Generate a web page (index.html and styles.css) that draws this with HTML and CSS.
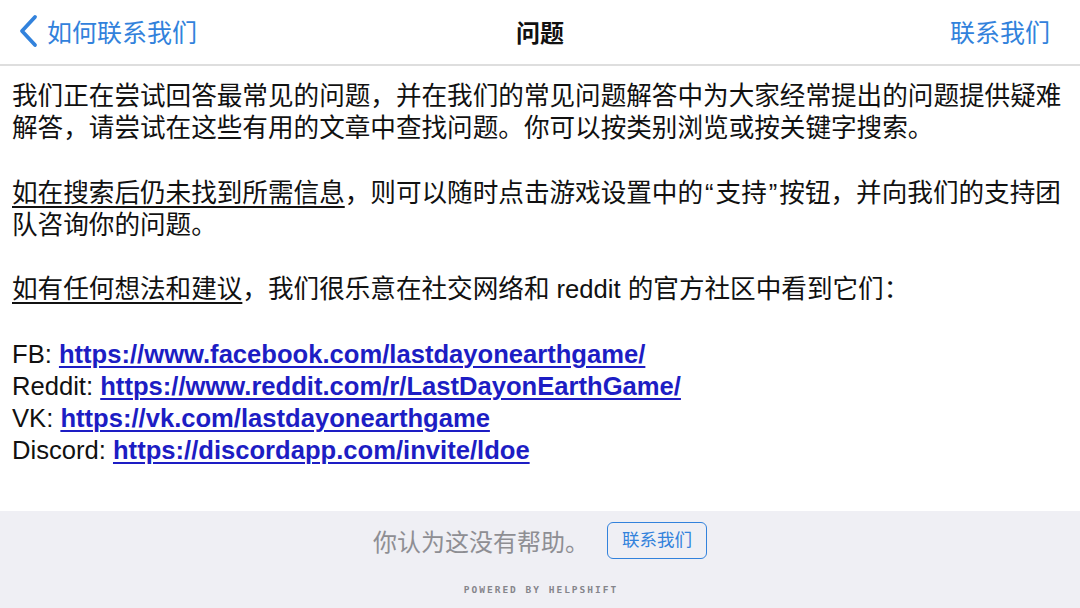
FILE: index.html
```html
<!DOCTYPE html>
<html lang="zh-CN">
<head>
    <meta charset="utf-8">
    <title>问题</title>
    <link rel="stylesheet" href="styles.css">
</head>
<body>
    <div class="nav-bar">
        <div class="nav-back">
            <svg class="back-icon" width="22" height="34" viewBox="0 0 22 34">
                <path d="M18 3 L5 17 L18 31" fill="none" stroke="#3282dc" stroke-width="3.8" stroke-linecap="round" stroke-linejoin="round"/>
            </svg>
            <span>如何联系我们</span>
        </div>
        <div class="nav-title">问题</div>
        <div class="nav-action">联系我们</div>
    </div>

    <div class="faq-content">
        <p>我们正在尝试回答最常见的问题，并在我们的常见问题解答中为大家经常提出的问题提供疑难解答，请尝试在这些有用的文章中查找问题。你可以按类别浏览或按关键字搜索。</p>
        <p><span class="under">如在搜索后仍未找到所需信息</span>，则可以随时点击游戏设置中的<span class="quote">“</span>支持<span class="quote">”</span>按钮，并向我们的支持团队咨询你的问题。</p>
        <p><span class="under">如有任何想法和建议</span>，我们很乐意在社交网络和 reddit 的官方社区中看到它们：</p>
        <p>
            FB: <a href="#">https://www.facebook.com/lastdayonearthgame/</a><br>
            Reddit: <a href="#">https://www.reddit.com/r/LastDayonEarthGame/</a><br>
            VK: <a href="#">https://vk.com/lastdayonearthgame</a><br>
            Discord: <a href="#">https://discordapp.com/invite/ldoe</a>
        </p>
    </div>

    <div class="footer">
        <div class="footer-row">
            <span class="footer-text">你认为这没有帮助。</span>
            <span class="contact-button">联系我们</span>
        </div>
        <div class="powered">POWERED BY HELPSHIFT</div>
    </div>
</body>
</html>
```

FILE: styles.css
```css
body {
    margin: 0;
    padding: 0;
    width: 1080px;
    height: 608px;
    background-color: #fff;
    font-family: "Liberation Sans", "Noto Sans CJK SC", sans-serif;
    color: #111;
    display: flex;
    flex-direction: column;
    overflow: hidden;
}
.nav-bar {
    height: 62px;
    padding: 0 30px 2px 17px;
    border-bottom: 2px solid #dedede;
    display: flex;
    align-items: center;
    justify-content: space-between;
    position: relative;
    flex-shrink: 0;
}
.nav-back {
    display: flex;
    align-items: center;
    gap: 8px;
    color: #3282dc;
    font-size: 25px;
}
.back-icon {
    display: block;
}
.nav-title {
    position: absolute;
    left: 0;
    right: 0;
    text-align: center;
    font-size: 24px;
    font-weight: bold;
    color: #111;
    pointer-events: none;
}
.nav-action {
    color: #3282dc;
    font-size: 25px;
}
.faq-content {
    flex: 1;
    padding: 14px 12px 0 12px;
    font-size: 25.6px;
    line-height: 32.2px;
}
.faq-content p {
    margin: 0 0 32.2px 0;
}
.quote {
    margin: 0 2px;
}
.under {
    text-decoration: underline;
    text-underline-offset: 4px;
    text-decoration-thickness: 1.5px;
}
.faq-content a {
    color: #1d1dc4;
    font-weight: bold;
    text-decoration: underline;
    text-underline-offset: 3px;
    text-decoration-thickness: 2px;
}
.footer {
    height: 97px;
    background-color: #efeff4;
    display: flex;
    flex-direction: column;
    align-items: center;
    flex-shrink: 0;
}
.footer-row {
    display: flex;
    align-items: center;
    gap: 18px;
    padding-top: 11px;
}
.footer-text {
    color: #8e8e93;
    font-size: 24px;
}
.contact-button {
    border: 1.5px solid #3282dc;
    border-radius: 6px;
    color: #3282dc;
    font-size: 17.5px;
    padding: 0 14px;
    height: 35px;
    line-height: 35px;
}
.powered {
    margin-top: 25px;
    font-family: "DejaVu Sans Mono", monospace;
    font-size: 9.5px;
    font-weight: bold;
    letter-spacing: 2px;
    color: #85858b;
    padding-left: 2px;
}
```
